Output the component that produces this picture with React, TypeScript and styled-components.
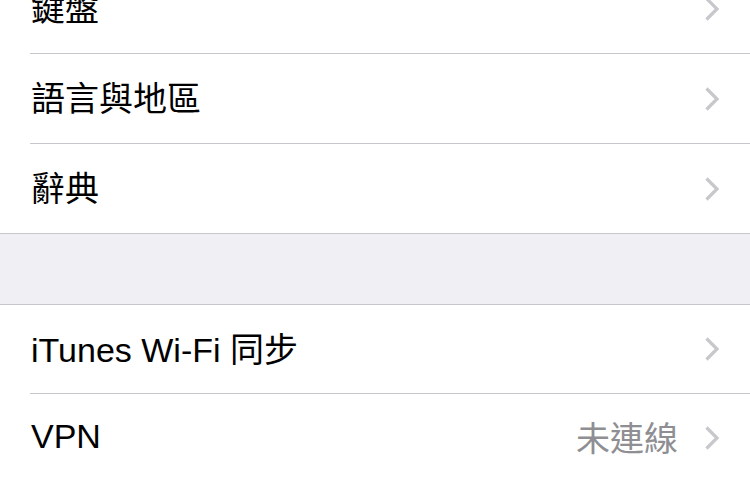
import styled, { createGlobalStyle } from "styled-components";

const GlobalStyle = createGlobalStyle`
  html, body {
    margin: 0;
    padding: 0;
    background: #efeff4;
    overflow: hidden;
  }
  body {
    font-family: "Liberation Sans", "Noto Sans CJK TC", sans-serif;
    -webkit-font-smoothing: antialiased;
  }
`;

type Item = { label: string; detail?: string };

const groups: Item[][] = [
  [{ label: "鍵盤" }, { label: "語言與地區" }, { label: "辭典" }],
  [{ label: "iTunes Wi-Fi 同步" }, { label: "VPN", detail: "未連線" }],
];

const Chevron = () => (
  <svg width="16" height="26" viewBox="0 0 16 26">
    <polyline
      points="2.5,2.5 13,13 2.5,23.5"
      fill="none"
      stroke="#c7c7cc"
      strokeWidth="3.2"
    />
  </svg>
);

const App = () => {
  return (
    <>
      <GlobalStyle />
      <Page>
        {groups.map((items, gi) => (
          <Group key={gi}>
            {items.map((item, i) => (
              <Row key={item.label}>
                <RowInner $last={i === items.length - 1} $tall={gi === 0}>
                  <Label>{item.label}</Label>
                  {item.detail && <Detail>{item.detail}</Detail>}
                  <Chevron />
                </RowInner>
              </Row>
            ))}
          </Group>
        ))}
      </Page>
    </>
  );
};

export default App;

const Page = styled.div`
  margin-top: -37px;
  display: flex;
  flex-direction: column;
  gap: 70px;
`;

const Group = styled.div`
  background: #fff;
  border-top: 1px solid #c8c7cc;
  border-bottom: 1px solid #c8c7cc;
`;

const Row = styled.div`
  padding-left: 30px;
`;

const RowInner = styled.div<{ $last: boolean; $tall: boolean }>`
  height: ${(p) => (p.$tall ? 89 : 88)}px;
  display: flex;
  align-items: center;
  padding-right: 30px;
  border-bottom: ${(p) => (p.$last ? "none" : "1px solid #c8c7cc")};
`;

const Label = styled.div`
  flex: 1;
  font-size: 34px;
  color: #000;
  padding-left: 1px;
  margin-top: -4px;
`;

const Detail = styled.div`
  font-size: 34px;
  color: #8e8e93;
  margin-right: 26px;
  margin-top: -4px;
`;
